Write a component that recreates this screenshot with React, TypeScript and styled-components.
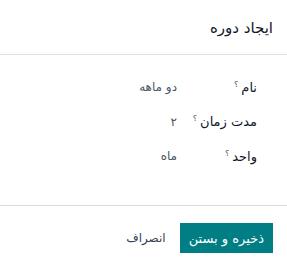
import { Fragment } from 'react';
import styled, { createGlobalStyle } from 'styled-components';

const GlobalStyle = createGlobalStyle`
  html, body {
    margin: 0;
    padding: 0;
    background: #ffffff;
  }
  body {
    font-family: "DejaVu Sans", "Noto Sans", sans-serif;
    color: #212529;
  }
`;

const Dialog = styled.div`
  width: 287px;
  height: 265px;
  display: flex;
  flex-direction: column;
  background: #ffffff;
  direction: rtl;
`;

const Header = styled.header`
  height: 55px;
  box-sizing: border-box;
  display: flex;
  align-items: center;
  padding: 2px 14px 0;
  border-bottom: 1px solid #dee2e6;
`;

const Title = styled.h4`
  margin: 0;
  font-size: 15px;
  font-weight: 400;
  color: #111827;
`;

const Body = styled.div`
  height: 151px;
  box-sizing: border-box;
  padding: 15px 30px 0 0;
  display: grid;
  grid-template-columns: 80px auto;
  grid-auto-rows: 34.5px;
  align-content: start;
  align-items: center;
  border-bottom: 1px solid #d8dadd;
`;

const Label = styled.span`
  font-size: 13px;
  font-weight: 500;
  color: #111827;
  white-space: nowrap;
`;

const Help = styled.sup`
  font-size: 8px;
  margin-right: 3px;
  color: #4b5563;
`;

const Value = styled.span`
  font-size: 12px;
  color: #4b5563;
`;

const Footer = styled.footer`
  display: flex;
  align-items: center;
  gap: 14px;
  padding: 17px 14px 0;
`;

const Button = styled.button<{ $primary?: boolean }>`
  height: 30px;
  border: none;
  border-radius: 0;
  padding: 0 ${({ $primary }) => ($primary ? '9px' : '0')};
  font-family: inherit;
  font-size: ${({ $primary }) => ($primary ? '13px' : '12px')};
  font-weight: 400;
  background: ${({ $primary }) => ($primary ? '#017e84' : 'transparent')};
  color: ${({ $primary }) => ($primary ? '#ffffff' : '#374151')};
  cursor: pointer;
`;

const fields = [
  { label: 'نام', value: 'دو ماهه' },
  { label: 'مدت زمان', value: '۲' },
  { label: 'واحد', value: 'ماه' },
];

export default function App() {
  return (
    <>
      <GlobalStyle />
      <Dialog>
        <Header>
          <Title>ایجاد دوره</Title>
        </Header>
        <Body>
          {fields.map(f => (
            <Fragment key={f.label}>
              <Label>
                {f.label}
                <Help>؟</Help>
              </Label>
              <Value>{f.value}</Value>
            </Fragment>
          ))}
        </Body>
        <Footer>
          <Button $primary>ذخیره و بستن</Button>
          <Button>انصراف</Button>
        </Footer>
      </Dialog>
    </>
  );
}
